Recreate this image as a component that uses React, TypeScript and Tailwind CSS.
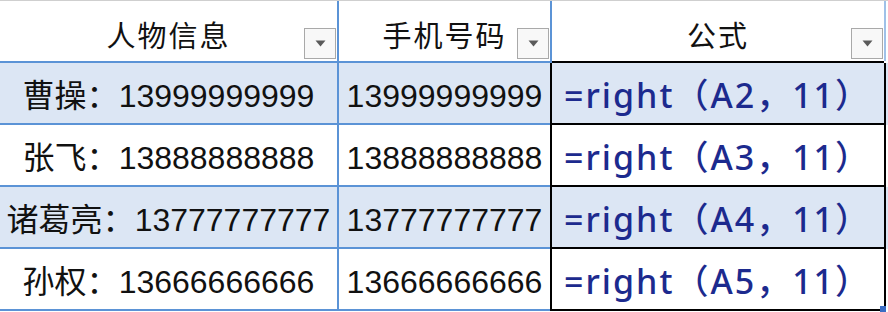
const rows = [
    { name: '曹操：', phone: '13999999999', cell: 'A2', shaded: true },
    { name: '张飞：', phone: '13888888888', cell: 'A3', shaded: false },
    { name: '诸葛亮：', phone: '13777777777', cell: 'A4', shaded: true },
    { name: '孙权：', phone: '13666666666', cell: 'A5', shaded: false },
]

function FilterButton() {
    return (
        <div className="absolute right-[1px] bottom-[2px] w-[32px] h-[31px] bg-[#f8f8f8] border border-[#a9a9a9] flex items-center justify-center">
            <svg width="11" height="7" viewBox="0 0 11 7">
                <path d="M0.5 0.5 L10.5 0.5 L5.5 6.5 Z" fill="#5a5a5a" />
            </svg>
        </div>
    )
}

function HeaderCell({ title, className }: { title: string; className: string }) {
    return (
        <div className={`relative h-full flex items-center justify-center pt-[14px] ${className}`}>
            <span className="text-[29px] tracking-[2px] text-[#111]">{title}</span>
            <FilterButton />
        </div>
    )
}

export default function App() {
    return (
        <div className="relative w-[888px] h-[312px] bg-white border-t border-[#cfcfcf] font-['Liberation_Sans','Noto_Sans_CJK_SC',sans-serif]">
            <div className="flex h-[62px]">
                <HeaderCell title="人物信息" className="w-[339px] border-r-2 border-b-2 border-[#5b93d6]" />
                <HeaderCell title="手机号码" className="w-[213px] border-r-2 border-b-2 border-[#5b93d6]" />
                <div className="w-[334px] h-full flex">
                    <div className="flex-1 h-full border-b-2 border-black">
                        <HeaderCell title="公式" className="h-[60px]" />
                    </div>
                    <div className="w-[2px] h-[60px] bg-[#9fc1e8]"></div>
                </div>
            </div>
            {rows.map((row, index) => (
                <div key={index} className={`flex h-[62px] ${row.shaded ? 'bg-[#dce6f4]' : 'bg-white'}`}>
                    <div className="w-[339px] border-r-2 border-b-2 border-[#5b93d6] flex items-center justify-center pt-[5px] text-[32px] text-[#111] whitespace-nowrap">
                        {row.name}{row.phone}
                    </div>
                    <div className="w-[211px] border-b-2 border-[#5b93d6] flex items-center justify-center pt-[5px] text-[32px] text-[#111]">
                        {row.phone}
                    </div>
                    <div className="w-[336px] border-x-2 border-b-2 border-black flex items-center pl-[12px] pt-[5px] text-[34px] font-medium tracking-[2px] text-[#1c2a8e] font-['Noto_Sans','Noto_Sans_CJK_SC',sans-serif] whitespace-nowrap">
                        =right（{row.cell}，11）
                    </div>
                </div>
            ))}
            <div className="absolute left-[880px] top-[305px] w-[6px] h-[6px] bg-[#3a6cc4]"></div>
        </div>
    )
}
